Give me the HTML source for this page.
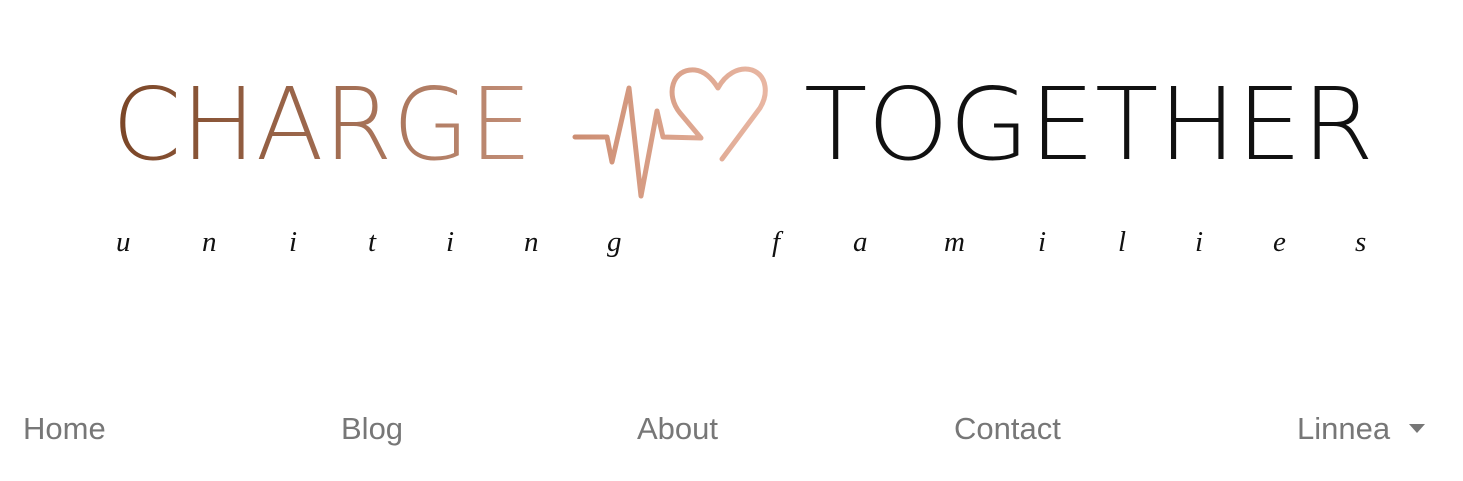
<!DOCTYPE html>
<html><head><meta charset="utf-8"><style>
html,body{margin:0;padding:0;background:#fff;width:1463px;height:481px;overflow:hidden}
.nav{position:absolute;top:411px;font-family:"Liberation Sans",sans-serif;font-size:31px;color:#777;line-height:36px}
</style></head><body>
<svg width="1463" height="481" style="position:absolute;left:0;top:0">
<defs>
<linearGradient id="g1" gradientUnits="userSpaceOnUse" x1="113" y1="0" x2="535" y2="0">
<stop offset="0" stop-color="#7a4526"/><stop offset="1" stop-color="#c49079"/></linearGradient>
<linearGradient id="g2" gradientUnits="userSpaceOnUse" x1="574" y1="0" x2="765" y2="0">
<stop offset="0" stop-color="#cc8d72"/><stop offset="1" stop-color="#e8b6a2"/></linearGradient>
</defs>
<text x="112" y="159" font-family="DejaVu Sans" font-weight="200" font-size="100" fill="url(#g1)" textLength="420" lengthAdjust="spacingAndGlyphs">CHARGE</text>
<text x="804" y="159" font-family="DejaVu Sans" font-weight="200" font-size="100" fill="#111" textLength="570" lengthAdjust="spacingAndGlyphs">TOGETHER</text>
<path d="M575,137 L607,137 L612,162 L629,88 L641,196 L657,111 L663,137 L701,138 L680,113 C665,95 672,68 695,70 C705,71 713,80 718,88 C725,75 738,66 752,70 C768,76 768,95 760,108 L722,159" fill="none" stroke="url(#g2)" stroke-width="5" stroke-linecap="round" stroke-linejoin="round"/>
<g font-family="Liberation Serif" font-style="italic" font-size="29" fill="#111">
<text x="116" y="251">u</text><text x="202" y="251">n</text><text x="289" y="251">i</text><text x="368" y="251">t</text><text x="446" y="251">i</text><text x="524" y="251">n</text><text x="607" y="251">g</text>
<text x="772" y="251">f</text><text x="853" y="251">a</text><text x="944" y="251">m</text><text x="1038" y="251">i</text><text x="1118" y="251">l</text><text x="1195" y="251">i</text><text x="1273" y="251">e</text><text x="1355" y="251">s</text>
</g>
<path d="M1409,424 L1425,424 L1417,433 Z" fill="#777"/>
</svg>
<div class="nav" style="left:23px">Home</div>
<div class="nav" style="left:341px">Blog</div>
<div class="nav" style="left:637px">About</div>
<div class="nav" style="left:954px">Contact</div>
<div class="nav" style="left:1297px">Linnea</div>
</body></html>
